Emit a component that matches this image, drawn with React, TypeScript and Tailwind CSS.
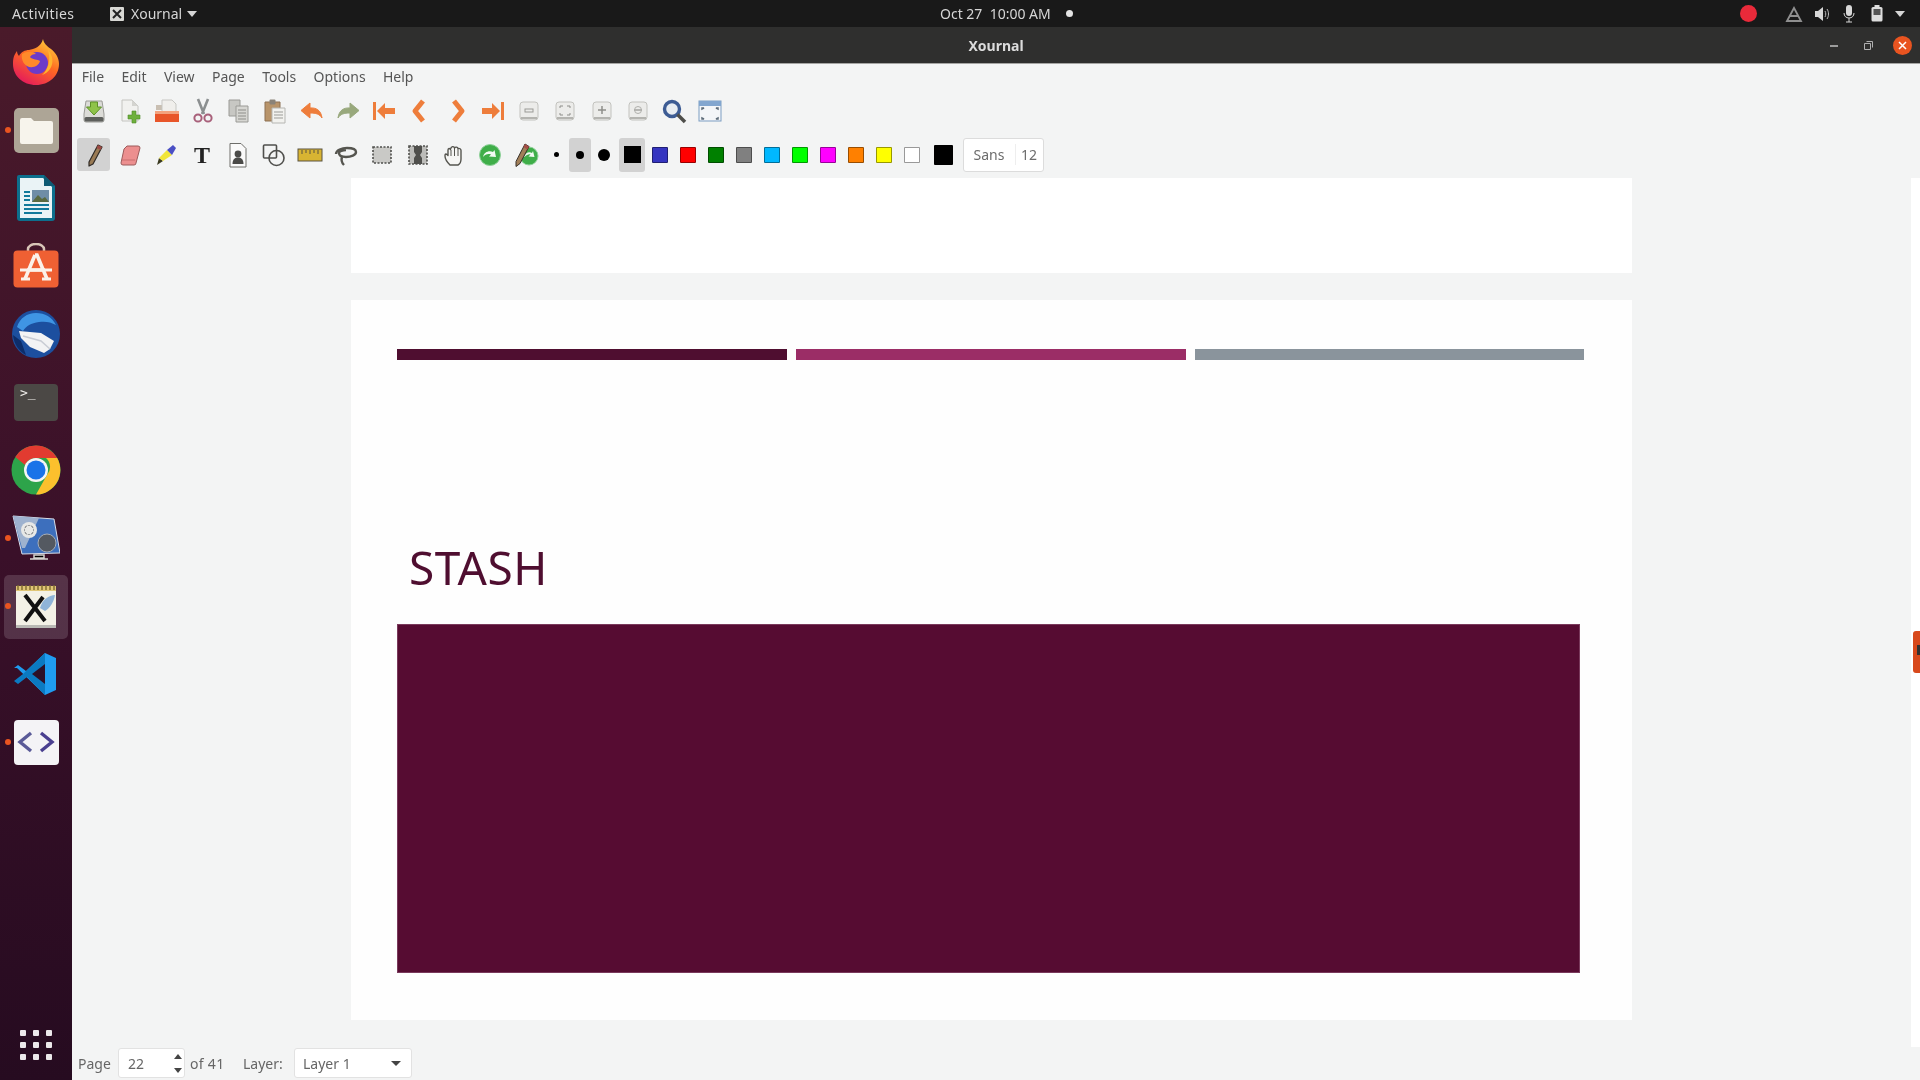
import type { ReactNode } from "react";

const ui = "font-['Noto_Sans',sans-serif]";

function Ico({ size = 26, box = 26, children }: { size?: number; box?: number; children: ReactNode }) {
  return (
    <svg width={size} height={size} viewBox={`0 0 ${box} ${box}`}>
      {children}
    </svg>
  );
}

/* toolbar row 1 */
const SaveIcon = () => (
  <Ico>
    <path d="M3 16 5 3h16l2 13v6a2 2 0 0 1-2 2H5a2 2 0 0 1-2-2z" fill="#dcdcd8" stroke="#9a9a96" />
    <rect x="3.5" y="19" width="19" height="4.5" rx="1.5" fill="#5d5f5c" />
    <path d="M9.5 4h7v5h4l-7.5 8L5.500 9h4z" fill="#8fc34a" stroke="#5d9128" />
  </Ico>
);
const NewIcon = () => (
  <Ico>
    <path d="M5 2h10l6 6v15H5z" fill="#f1f1ef" stroke="#c4c4c0" />
    <path d="M15 2v6h6z" fill="#d4d4d0" />
    <path d="M15 13h4v4h4v4h-4v4h-4v-4h-4v-4h4z" fill="#6eb03c" stroke="#4d8b2a" strokeWidth=".6" />
  </Ico>
);
const OpenIcon = () => (
  <Ico>
    <path d="M2 12V7h7l2 2h4v3z" fill="#c9bfb2" />
    <path d="M8 2h10l4 4v8H8z" fill="#f0efec" stroke="#c7c7c3" />
    <path d="M1 13h24v11H1z" fill="#e8562a" />
    <path d="M1 13h24v3H1z" fill="#f3a37f" />
  </Ico>
);
const CutIcon = () => (
  <Ico>
    <path d="M8 1l6 15M18 1l-6 15" stroke="#8b8f90" strokeWidth="2.6" fill="none" />
    <circle cx="8" cy="20" r="3.600" fill="none" stroke="#a8607a" strokeWidth="2" />
    <circle cx="18" cy="20" r="3.600" fill="none" stroke="#a8607a" strokeWidth="2" />
  </Ico>
);
const CopyIcon = () => (
  <Ico>
    <path d="M3 2h11v16H3z" fill="#c7c7c3" stroke="#9a9a96" />
    <path d="M10 8h12v16H10z" fill="#d6d6d2" stroke="#9a9a96" />
    <path d="M12 12h8M12 15h8M12 18h8M12 21h8" stroke="#8e8e8a" />
  </Ico>
);
const PasteIcon = () => (
  <Ico>
    <path d="M3 4h15v19H3z" fill="#b8946a" stroke="#8d7152" />
    <rect x="7.500" y="1.500" width="6" height="5" rx="1" fill="#8b8378" />
    <path d="M10 10h13v15H10z" fill="#f2f2ef" stroke="#b6b6b2" />
    <path d="M12 14h9M12 17h9M12 20h9" stroke="#9b9b97" />
  </Ico>
);
const UndoIcon = ({ c = "#ee7d3b" }: { c?: string }) => (
  <Ico>
    <path d="M11 5v5c6-.5 11 2 12 10-2.500-4-6-5-12-5v5L2 12.500z" fill={c} stroke={c} strokeLinejoin="round" />
  </Ico>
);
const RedoIcon = () => (
  <Ico>
    <path d="M15 5v5C9 9.500 4 12 3 20c2.500-4 6-5 12-5v5l9-7.500z" fill="#98a87c" stroke="#98a87c" strokeLinejoin="round" />
  </Ico>
);
const FirstIcon = () => (
  <Ico>
    <path d="M2 4h3v18H2zM6 13l8-8v5h10v6H14v5z" fill="#ee7d3b" />
  </Ico>
);
const LastIcon = () => (
  <Ico>
    <path d="M24 4h-3v18h3zM20 13l-8-8v5H2v6h10v5z" fill="#ee7d3b" />
  </Ico>
);
const PrevIcon = () => (
  <Ico>
    <path d="M16 3 8 13l8 10" fill="none" stroke="#ee7d3b" strokeWidth="5" strokeLinejoin="round" />
  </Ico>
);
const NextIcon = () => (
  <Ico>
    <path d="M10 3l8 10-8 10" fill="none" stroke="#ee7d3b" strokeWidth="5" strokeLinejoin="round" />
  </Ico>
);
const ZoomButton = ({ children }: { children: ReactNode }) => (
  <Ico>
    <rect x="4" y="4" width="18" height="18" rx="3" fill="#ececea" stroke="#c2c2be" />
    <path d="M5 20h16" stroke="#b4b4b0" strokeWidth="2" />
    {children}
  </Ico>
);
const MagnifierIcon = () => (
  <Ico>
    <circle cx="11" cy="11" r="7.500" fill="#e8edf2" stroke="#3d5c94" strokeWidth="3.400" />
    <path d="M16.500 16.500 24 24" stroke="#4e4e4a" strokeWidth="3.600" />
  </Ico>
);
const FullscreenIcon = () => (
  <Ico>
    <rect x="2" y="3" width="22" height="20" fill="#f4f6f8" stroke="#7d9dc2" />
    <rect x="2" y="3" width="22" height="5" fill="#82a6cf" />
    <path d="M5 11v-1h2zM21 11v-1h-2zM5 20v1h2zM21 20v1h-2z" stroke="#5f6d7a" strokeWidth="1.500" />
  </Ico>
);

/* toolbar row 2 */
const PenIcon = () => (
  <Ico>
    <path d="M17 3l4 2-9 17-4 2 0-4z" fill="#9a7b55" stroke="#2f2a26" strokeWidth="1.200" strokeLinejoin="round" />
    <path d="M17 3l4 2-1.500 3-4-2z" fill="#9d4b45" />
  </Ico>
);
const EraserIcon = () => (
  <Ico>
    <path d="M10 4h11a2 2 0 0 1 2 2l-4 15a2 2 0 0 1-2 2H6a2 2 0 0 1-2-2l3-14z" fill="#ec8f8f" stroke="#9c5b5b" />
    <path d="M5 18h13" stroke="#c96f6f" />
  </Ico>
);
const HighlighterIcon = () => (
  <Ico>
    <path d="M4 23l2-7 4 3z" fill="#3a3a20" />
    <path d="M6 16 14 8l5 5-9 6z" fill="#f0e53a" />
    <path d="M14 8l6-5 3 3-4 7z" fill="#4a4fc4" />
  </Ico>
);
const ImageIcon = () => (
  <Ico>
    <path d="M5 1.500h11l5 5V25H5z" fill="#fafafa" stroke="#6e6e6a" />
    <circle cx="13" cy="12" r="3.400" fill="#4a4a48" />
    <path d="M7.500 22c0-5 2.500-6.500 5.500-6.500s5.500 1.500 5.500 6.500z" fill="#4a4a48" />
  </Ico>
);
const ShapesIcon = () => (
  <Ico>
    <rect x="2.500" y="3" width="13" height="13" rx="1" fill="none" stroke="#4f4f4c" strokeWidth="1.600" />
    <circle cx="15.500" cy="16" r="7.500" fill="none" stroke="#4f4f4c" strokeWidth="1.600" />
  </Ico>
);
const RulerIcon = () => (
  <Ico>
    <rect x="1" y="7" width="24" height="12" fill="#d8b432" stroke="#5a5340" />
    <path d="M5 8v4M9 8v3M13 8v4M17 8v3M21 8v4" stroke="#5a5340" />
  </Ico>
);
const LassoIcon = () => (
  <Ico>
    <path d="M3 12c0-4 6-6 11-6s9 1 9 4-5 5-10 5-7-2-7-4 4-3 7-3" fill="none" stroke="#55554f" strokeWidth="2.400" />
    <path d="M9 15c-1 3 0 6 2 8" fill="none" stroke="#55554f" strokeWidth="2.400" />
  </Ico>
);
const SelectRectIcon = () => (
  <Ico>
    <rect x="4" y="5" width="18" height="16" fill="#c9c9c6" stroke="#4f4f4c" strokeWidth="1.600" strokeDasharray="2 1.500" />
  </Ico>
);
const SelectObjectIcon = () => (
  <Ico>
    <rect x="4" y="4" width="18" height="18" fill="#bcbcb9" stroke="#4f4f4c" strokeWidth="1.600" strokeDasharray="2 1.500" />
    <path d="M9 4h8v6l-2 3 2 3v6H9v-6l2-3-2-3z" fill="#4f4f4c" />
  </Ico>
);
const HandIcon = () => (
  <Ico>
    <path d="M9 23c-2-2-5-6-5-9s1.500-2 3-.5V8c0-2 2-2 2.500-.5C10 4 13 4 13.500 6c1-1.500 3-1 3.500 .5 1.500-.5 3 .5 3 2V17c0 3-1 5-3 6z" fill="#f6f6f4" stroke="#55554f" strokeWidth="1.400" strokeLinejoin="round" />
    <path d="M10 8v6M13.500 6v8M17 7v7" stroke="#55554f" />
  </Ico>
);
const RefreshIcon = () => (
  <Ico>
    <circle cx="13" cy="13" r="10.500" fill="#3fae49" stroke="#8fd19a" />
    <path d="M6 15c1-5 6-7 10-5l1.500-2 1.500 7-7-.5 2-2c-3-1-6 0-8 2.500z" fill="#f2faf2" />
  </Ico>
);
const PenRefreshIcon = () => (
  <Ico>
    <circle cx="16" cy="14" r="9" fill="#3fae49" stroke="#8fd19a" />
    <path d="M11 15c1-4 5-6 8-4l1-2 1.500 6-6-.5 2-2c-2-.5-4 .5-6 2.500z" fill="#f2faf2" />
    <path d="M12 2l4 2.500-9 17-4 3 0-5z" fill="#a17f58" stroke="#3a322b" strokeLinejoin="round" />
    <path d="M12 2l4 2.500-1.500 3-4-2.500z" fill="#a44d46" />
  </Ico>
);

/* dock */
const Firefox = () => (
  <svg width="48" height="48" viewBox="0 0 48 48">
    <defs>
      <linearGradient id="ff" x1="0.8" y1="0" x2="0.2" y2="1">
        <stop offset="0" stopColor="#ffd23c" />
        <stop offset="0.45" stopColor="#ff6a22" />
        <stop offset="1" stopColor="#e3155f" />
      </linearGradient>
    </defs>
    <path d="M31 1c1 5 4 7 8 10 5 4 8 9 8 15 0 12-10 21-23 21S1 38 1 26c0-6 1-9 4-13 0 2 1 4 2 5 2-4 6-6 10-6 5-1 12-3 14-11z" fill="url(#ff)" />
    <circle cx="25" cy="25" r="11" fill="#6d3bc8" />
    <path d="M10 16c4-3 11-3 14 0-3 0-5 1-6 3 2 3 8 2 10 4-1 5-8 8-13 5-4-2-6-8-5-12z" fill="#ff8a2a" />
    <path d="M36 12c5 5 6 13 2 19-2 3-5 5-8 6 6-5 9-15 6-25z" fill="#ffb52e" />
  </svg>
);
const Files = () => (
  <div className="w-[45px] h-[45px] rounded-[5px] bg-[#ada596] flex items-center justify-center">
    <svg width="33" height="27" viewBox="0 0 33 27">
      <path d="M0 3a2 2 0 0 1 2-2h9l3 3h17a2 2 0 0 1 2 2v19a2 2 0 0 1-2 2H2a2 2 0 0 1-2-2z" fill="#f7f4ec" />
    </svg>
  </div>
);
const Writer = () => (
  <svg width="38" height="46" viewBox="0 0 38 46">
    <path d="M2 0h25l11 11v32a3 3 0 0 1-3 3H3a3 3 0 0 1-3-3V2a2 2 0 0 1 2-2z" fill="#0d6f8d" />
    <path d="M3 3h23l9 9v31H3z" fill="#eaf3f6" />
    <path d="M27 0l11 11H27z" fill="#0d5a74" />
    <rect x="15" y="15" width="17" height="12" fill="#6f8da6" />
    <path d="M15 27l6-7 4 4 3-2 4 5z" fill="#5a6a40" />
    <path d="M7 17h6M7 21h6M7 25h6M7 30h25M7 34h25M7 38h18" stroke="#12799b" strokeWidth="2" />
  </svg>
);
const Store = () => (
  <svg width="46" height="46" viewBox="0 0 46 46">
    <path d="M15 8V6a8 5 0 0 1 16 0v2" fill="none" stroke="#d9c6b8" strokeWidth="2.500" />
    <rect x="0.500" y="7.500" width="45" height="37" rx="4" fill="#ef6033" />
    <path d="M22 12h2l10 24M22 12 12 36M14 27h18" fill="none" stroke="#fbf2ea" strokeWidth="3.600" />
    <path d="M8 36h9M29 36h9M7 27h32" stroke="#fbf2ea" strokeWidth="3" />
  </svg>
);
const Thunderbird = () => (
  <svg width="50" height="50" viewBox="0 0 50 50">
    <circle cx="25" cy="25" r="24" fill="#1c4f9f" />
    <path d="M6 18c3-9 10-14 19-14 9 0 16 4 20 12-5-3-11-4-17-3-8 1-13 4-16 9z" fill="#3f95e4" />
    <path d="M8 22l22 2 13 8-4 8-6 4-14-6-9-9z" fill="#f3f3f4" />
    <path d="M12 27l18 5 9 8" fill="none" stroke="#c9ccd4" strokeWidth="1.500" />
    <path d="M2 26c1 10 7 17 13 20l-5-14z" fill="#0d2d6a" />
  </svg>
);
const Terminal = () => (
  <div className="w-[44px] h-[37px] rounded-[4px] bg-[#4b4845] pl-[6px] text-[13px] leading-[17px] text-[#f1efec] font-['DejaVu_Sans_Mono',monospace]">
    &gt;_
  </div>
);
const Chrome = () => (
  <svg width="50" height="50" viewBox="0 0 50 50">
    <circle cx="25" cy="25" r="24.500" fill="#2da44a" />
    <path d="M25 .5A24.500 24.500 0 0 1 46.200 13H25a12 12 0 0 0-11 7L4.300 12A24.500 24.500 0 0 1 25 .5z" fill="#e23b30" />
    <path d="M46.200 13A24.500 24.500 0 0 1 25 49.500L36 30a12 12 0 0 0-1-17z" fill="#fbc02d" />
    <circle cx="25" cy="25" r="12" fill="#f5f5f5" />
    <circle cx="25" cy="25" r="9.500" fill="#1a73e8" />
  </svg>
);
const Recorder = () => (
  <svg width="48" height="48" viewBox="0 0 48 48">
    <path d="M1 2l41 3 6 34-38 1z" fill="#3d6fbd" stroke="#d8dde8" />
    <path d="M1 2l26 2-14 30h-3z" fill="#9eb2cf" />
    <circle cx="17" cy="16" r="8" fill="#e8e8e6" />
    <path d="M17 11v.5M17 21v-.5M12 16h.5M22 16h-.5M13.500 12.500l.5.5M20.500 19.500l-.5-.5M13.500 19.500l.5-.5M20.500 12.500l-.5.5" stroke="#55585e" strokeWidth="2.600" />
    <circle cx="35" cy="29" r="9" fill="#545961" stroke="#a8adb5" />
    <path d="M22 41h10v3H22zM18 45h18" stroke="#d4d4d0" strokeWidth="1.500" />
  </svg>
);
const XournalDock = () => (
  <svg width="42" height="46" viewBox="0 0 42 46">
    <rect x="1" y="4" width="40" height="38" fill="#f3f1e6" />
    <rect x="1" y="3" width="40" height="5" fill="#e0c676" />
    <path d="M3 2v5M7 2v5M11 2v5M15 2v5M19 2v5M23 2v5M27 2v5M31 2v5M35 2v5M39 2v5" stroke="#7d6a30" strokeWidth="1.400" />
    <path d="M1 42h40v3H1z" fill="#b9b9b4" />
    <path d="M10 12l20 26M28 14 10 38" stroke="#111" strokeWidth="4" />
    <path d="M40 12c-6 0-13 5-15 13l5 3c5-3 9-9 10-16z" fill="#8fb4d8" />
  </svg>
);
const VsCode = () => (
  <svg width="44" height="44" viewBox="0 0 44 44">
    <path d="M31 1 42 6v32l-11 5L3 16l-3 0 0 0 4-3 8 6L31 1z" fill="#1f9cf0" />
    <path d="M31 1v42L13 25 4 32l-4-3 9-7z" fill="#0b7ac2" />
    <path d="M31 12v20L18 22z" fill="#2d1027" />
  </svg>
);
const CodeTile = () => (
  <div className="w-[45px] h-[45px] rounded-[4px] bg-[#f4f3f6] flex items-center justify-center">
    <svg width="38" height="24" viewBox="0 0 38 24">
      <path d="M14 3 3 12l11 9" fill="none" stroke="#5a5a98" strokeWidth="3.400" />
      <path d="M24 3l11 9-11 9" fill="none" stroke="#4a3f90" strokeWidth="3.400" />
    </svg>
  </div>
);

const dock: { el: ReactNode; running?: boolean; active?: boolean }[] = [
  { el: <Firefox /> },
  { el: <Files />, running: true },
  { el: <Writer /> },
  { el: <Store /> },
  { el: <Thunderbird /> },
  { el: <Terminal /> },
  { el: <Chrome /> },
  { el: <Recorder />, running: true },
  { el: <XournalDock />, running: true, active: true },
  { el: <VsCode /> },
  { el: <CodeTile />, running: true },
];

const row1 = [
  <SaveIcon />, <NewIcon />, <OpenIcon />, <CutIcon />, <CopyIcon />, <PasteIcon />,
  <UndoIcon />, <RedoIcon />, <FirstIcon />, <PrevIcon />, <NextIcon />, <LastIcon />,
  <ZoomButton><rect x="9" y="11" width="8" height="3" fill="none" stroke="#9a9a96" /></ZoomButton>,
  <ZoomButton><path d="M8 10V8h3M15 8h3v2M8 15v2h3M15 17h3v-2" fill="none" stroke="#8e8e8a" /></ZoomButton>,
  <ZoomButton><path d="M13 8v8M9 12h8" stroke="#8e8e8a" strokeWidth="1.500" /></ZoomButton>,
  <ZoomButton><path d="M9 12h8" stroke="#a5a5a1" strokeWidth="1.500" /><circle cx="13" cy="12" r="3.500" fill="none" stroke="#b0b0ac" /></ZoomButton>,
  <MagnifierIcon />, <FullscreenIcon />,
];

const row2 = [
  <EraserIcon />, <HighlighterIcon />,
  <span className="font-['Liberation_Serif',serif] font-bold text-[24px] leading-none text-[#222]">T</span>,
  <ImageIcon />, <ShapesIcon />, <RulerIcon />, <LassoIcon />, <SelectRectIcon />,
  <SelectObjectIcon />, <HandIcon />, <RefreshIcon />, <PenRefreshIcon />,
];

const swatches = [
  "bg-[#3535c0]", "bg-[#ff0000]", "bg-[#008000]", "bg-[#808080]", "bg-[#00b8ff]",
  "bg-[#00ff00]", "bg-[#ff00ff]", "bg-[#ff8000]", "bg-[#ffff00]", "bg-[#ffffff]",
];

const menus = ["File", "Edit", "View", "Page", "Tools", "Options", "Help"];

function TopBar() {
  return (
    <div className="h-[27px] shrink-0 bg-[#191919] relative flex items-center text-[14px] text-[#d6d6d6]">
      <span className="ml-[12px] w-[98px] tracking-[0.4px]">Activities</span>
      <svg width="14" height="14" viewBox="0 0 14 14" className="mr-[7px]">
        <rect width="14" height="14" rx="1" fill="#d8d8d4" />
        <path d="M3 3l8 8M11 3l-8 8" stroke="#222" strokeWidth="2" />
      </svg>
      <span>Xournal</span>
      <svg width="10" height="6" viewBox="0 0 10 6" className="ml-[5px]">
        <path d="M0 0h10L5 6z" fill="#d6d6d6" />
      </svg>
      <div className="absolute left-[940px] top-0 h-[27px] flex items-center">
        <span className="w-[126px] whitespace-pre">Oct 27  10:00 AM</span>
        <span className="w-[7px] h-[7px] rounded-full bg-[#e4e4e4]" />
      </div>
      <div className="ml-auto flex items-center h-full">
        <span className="w-[17px] h-[17px] rounded-full bg-[#e92a3a] mr-[28px]" />
        <svg width="18" height="18" viewBox="0 0 18 18" className="mr-[11px]">
          <path d="M2 16 9 3l7 13zM5 11h8" fill="none" stroke="#8f8f8f" strokeWidth="1.800" />
        </svg>
        <svg width="16" height="16" viewBox="0 0 16 16" className="mr-[13px]">
          <path d="M1 5h3l5-4v14l-5-4H1z" fill="#d8d8d8" />
          <path d="M11 5c1 2 1 4 0 6M13 3c2 3 2 7 0 10" fill="none" stroke="#bbb" />
        </svg>
        <svg width="12" height="18" viewBox="0 0 12 18" className="mr-[16.500px]">
          <rect x="3" y="0" width="6" height="11" rx="3" fill="#d8d8d8" />
          <path d="M1 8c0 3 2 5 5 5s5-2 5-5M6 13v4M3 17h6" fill="none" stroke="#d8d8d8" />
        </svg>
        <svg width="12" height="17" viewBox="0 0 12 17" className="mr-[12px]">
          <rect x="0.500" y="2" width="11" height="14.500" rx="1.500" fill="#ddd" />
          <rect x="3.500" y="0" width="5" height="2" fill="#ddd" />
          <rect x="2.500" y="4" width="7" height="6" fill="#555" />
        </svg>
        <svg width="10" height="6" viewBox="0 0 10 6" className="mr-[15px]">
          <path d="M0 0h10L5 6z" fill="#d6d6d6" />
        </svg>
      </div>
    </div>
  );
}

function Dock() {
  return (
    <div className="w-[72px] shrink-0 flex flex-col pt-px bg-gradient-to-b from-[#4a1a2a] via-[#3a1029] to-[#260b20]">
      {dock.map((d, i) => (
        <div key={i} className="relative h-[68px] shrink-0 flex items-center justify-center">
          {d.active && <div className="absolute left-[4px] top-[3px] w-[64px] h-[64px] rounded-[5px] bg-white/15" />}
          {d.running && <span className="absolute left-[5px] top-[31px] w-[6px] h-[6px] rounded-full bg-[#e95420]" />}
          <div className="relative flex items-center justify-center">{d.el}</div>
        </div>
      ))}
      <div className="mt-auto mb-[20px] mx-auto grid grid-cols-3 gap-x-[7px] gap-y-[6px]">
        {Array.from({ length: 9 }).map((_, i) => (
          <span key={i} className="w-[6px] h-[6px] rounded-[1px] bg-[#ece8ea]" />
        ))}
      </div>
    </div>
  );
}

function TitleBar() {
  return (
    <div className="h-[37px] shrink-0 bg-[#2f2f2e] border-b border-b-[#a5a5a3] relative flex items-center justify-center text-[14px] font-bold text-[#dcdcdc]">
      <span>Xournal</span>
      <div className="absolute right-[8px] top-0 h-[36px] flex items-center">
        <span className="w-[8px] h-[2px] bg-[#9c9c9c] mr-[26px] mt-[2px]" />
        <svg width="9" height="9" viewBox="0 0 9 9" className="mr-[20px]">
          <path d="M2.500.5h6v6M.5 2.500h6v6h-6z" fill="none" stroke="#b0b0b0" />
        </svg>
        <span className="w-[19px] h-[19px] rounded-full bg-[#e95420] flex items-center justify-center">
          <svg width="9" height="9" viewBox="0 0 9 9">
            <path d="M1 1l7 7M8 1 1 8" stroke="#fff" strokeWidth="1.500" />
          </svg>
        </span>
      </div>
    </div>
  );
}

function MenuBar() {
  return (
    <div className="h-[26px] shrink-0 pb-[2px] flex items-center text-[14px] text-[#555]">
      <div className="w-px" />
      {menus.map((m) => (
        <span key={m} className="px-[8.700px]">{m}</span>
      ))}
    </div>
  );
}

function ToolbarTop() {
  return (
    <div className="h-[43px] shrink-0 pb-[1px] flex items-center pl-[4px]">
      {row1.map((ic, i) => (
        <div key={i} className="w-[36.250px] shrink-0 flex items-center justify-center">{ic}</div>
      ))}
    </div>
  );
}

function ToolbarBottom() {
  return (
    <div className="h-[45px] shrink-0 pb-[2px] flex items-center pl-[5px]">
      <div className="w-[33px] h-[33px] rounded-[3px] bg-[#d2d2d2] flex items-center justify-center mr-[2px]"><PenIcon /></div>
      {row2.map((ic, i) => (
        <div key={i} className="w-[36px] shrink-0 flex items-center justify-center">{ic}</div>
      ))}
      <div className="w-[13px] flex justify-center ml-[6px]"><span className="w-[5px] h-[5px] rounded-full bg-black" /></div>
      <div className="ml-[5.500px] w-[22px] h-[34px] rounded-[3px] bg-[#d2d2d2] flex items-center justify-center"><span className="w-[8px] h-[8px] rounded-full bg-black" /></div>
      <div className="ml-[1.500px] w-[24px] flex justify-center"><span className="w-[12px] h-[12px] rounded-full bg-black" /></div>
      <div className="ml-[3px] w-[26px] h-[34px] rounded-[3px] bg-[#d2d2d2] flex items-center justify-center">
        <span className="w-[17px] h-[17px] bg-black" />
      </div>
      <div className="flex items-center ml-[0.500px]">
        {swatches.map((s, i) => (
          <div key={i} className="w-[28px] flex justify-center">
            <span className={`w-[16px] h-[16px] rounded-[1px] border border-black/40 ${s}`} />
          </div>
        ))}
      </div>
      <span className="ml-[8px] w-[19px] h-[20px] bg-black rounded-[1px]" />
      <div className="ml-[10px] w-[81px] h-[34px] rounded-[3px] bg-white border border-[#dcdcdc] flex items-center text-[14px] text-[#6c6c6c]">
        <span className="w-[52px] text-center border-r border-r-[#eeeeee]">Sans</span>
        <span className="flex-1 text-center">12</span>
      </div>
    </div>
  );
}

function Canvas() {
  return (
    <div className="flex-1 min-h-0 relative flex pl-[279px] bg-[#f3f4f4]">
      <div className="w-[1281px] flex flex-col">
        <div className="h-[95px] bg-white" />
        <div className="mt-[27px] h-[720px] bg-[#fefefe] px-[46px] pt-[49px] flex flex-col">
          <div className="flex gap-[9px]">
            <div className="w-[390px] h-[11px] bg-[#4f0e30]" />
            <div className="w-[390px] h-[11px] bg-[#9b2d66]" />
            <div className="w-[389px] h-[11px] bg-[#8a949c]" />
          </div>
          <div className="mt-[180px] pl-[12px] h-[84px] text-[46px] tracking-[0.5px] leading-[55px] text-[#4f0e30]">STASH</div>
          <div className="w-[1183px] h-[349px] bg-[#560c32] border border-[#7a3a5c]" />
        </div>
      </div>
      <div className="ml-auto w-[9px] h-[869px] bg-white" />
      <div className="absolute right-0 top-[453px] w-[7px] h-[42px] rounded-l-[3px] bg-[#d8491c]">
        <div className="absolute right-0 top-[14px] w-[3px] h-[10px] bg-[#333]" />
      </div>
    </div>
  );
}

function StatusBar() {
  return (
    <div className="h-[32px] shrink-0 pb-[2px] bg-[#f3f4f4] flex items-center pl-[6px] text-[14px] text-[#666]">
      <span className="w-[40px]">Page</span>
      <div className="w-[67px] h-[30px] bg-white border border-[#e2e2e2] rounded-[3px] flex items-center pl-[9px]">
        <span className="flex-1">22</span>
        <div className="flex flex-col gap-[9px] mr-[2px]">
          <svg width="8" height="5" viewBox="0 0 8 5"><path d="M0 5l4-5 4 5z" fill="#444" /></svg>
          <svg width="8" height="5" viewBox="0 0 8 5"><path d="M0 0l4 5 4-5z" fill="#444" /></svg>
        </div>
      </div>
      <span className="ml-[5px] w-[53px] tracking-[0.3px]">of 41</span>
      <span className="w-[51px]">Layer:</span>
      <div className="w-[118px] h-[30px] bg-white border border-[#e2e2e2] rounded-[3px] flex items-center pl-[8px] pr-[10px]">
        <span className="flex-1">Layer 1</span>
        <svg width="10" height="5" viewBox="0 0 10 5"><path d="M0 0h10L5 5z" fill="#444" /></svg>
      </div>
    </div>
  );
}

export default function App() {
  return (
    <div className={`w-[1920px] h-[1080px] overflow-hidden flex flex-col blur-[0.5px] ${ui}`}>
      <TopBar />
      <div className="flex-1 min-h-0 flex">
        <Dock />
        <div className="flex-1 min-w-0 flex flex-col bg-[#f3f4f4]">
          <TitleBar />
          <MenuBar />
          <ToolbarTop />
          <ToolbarBottom />
          <Canvas />
          <StatusBar />
        </div>
      </div>
    </div>
  );
}
